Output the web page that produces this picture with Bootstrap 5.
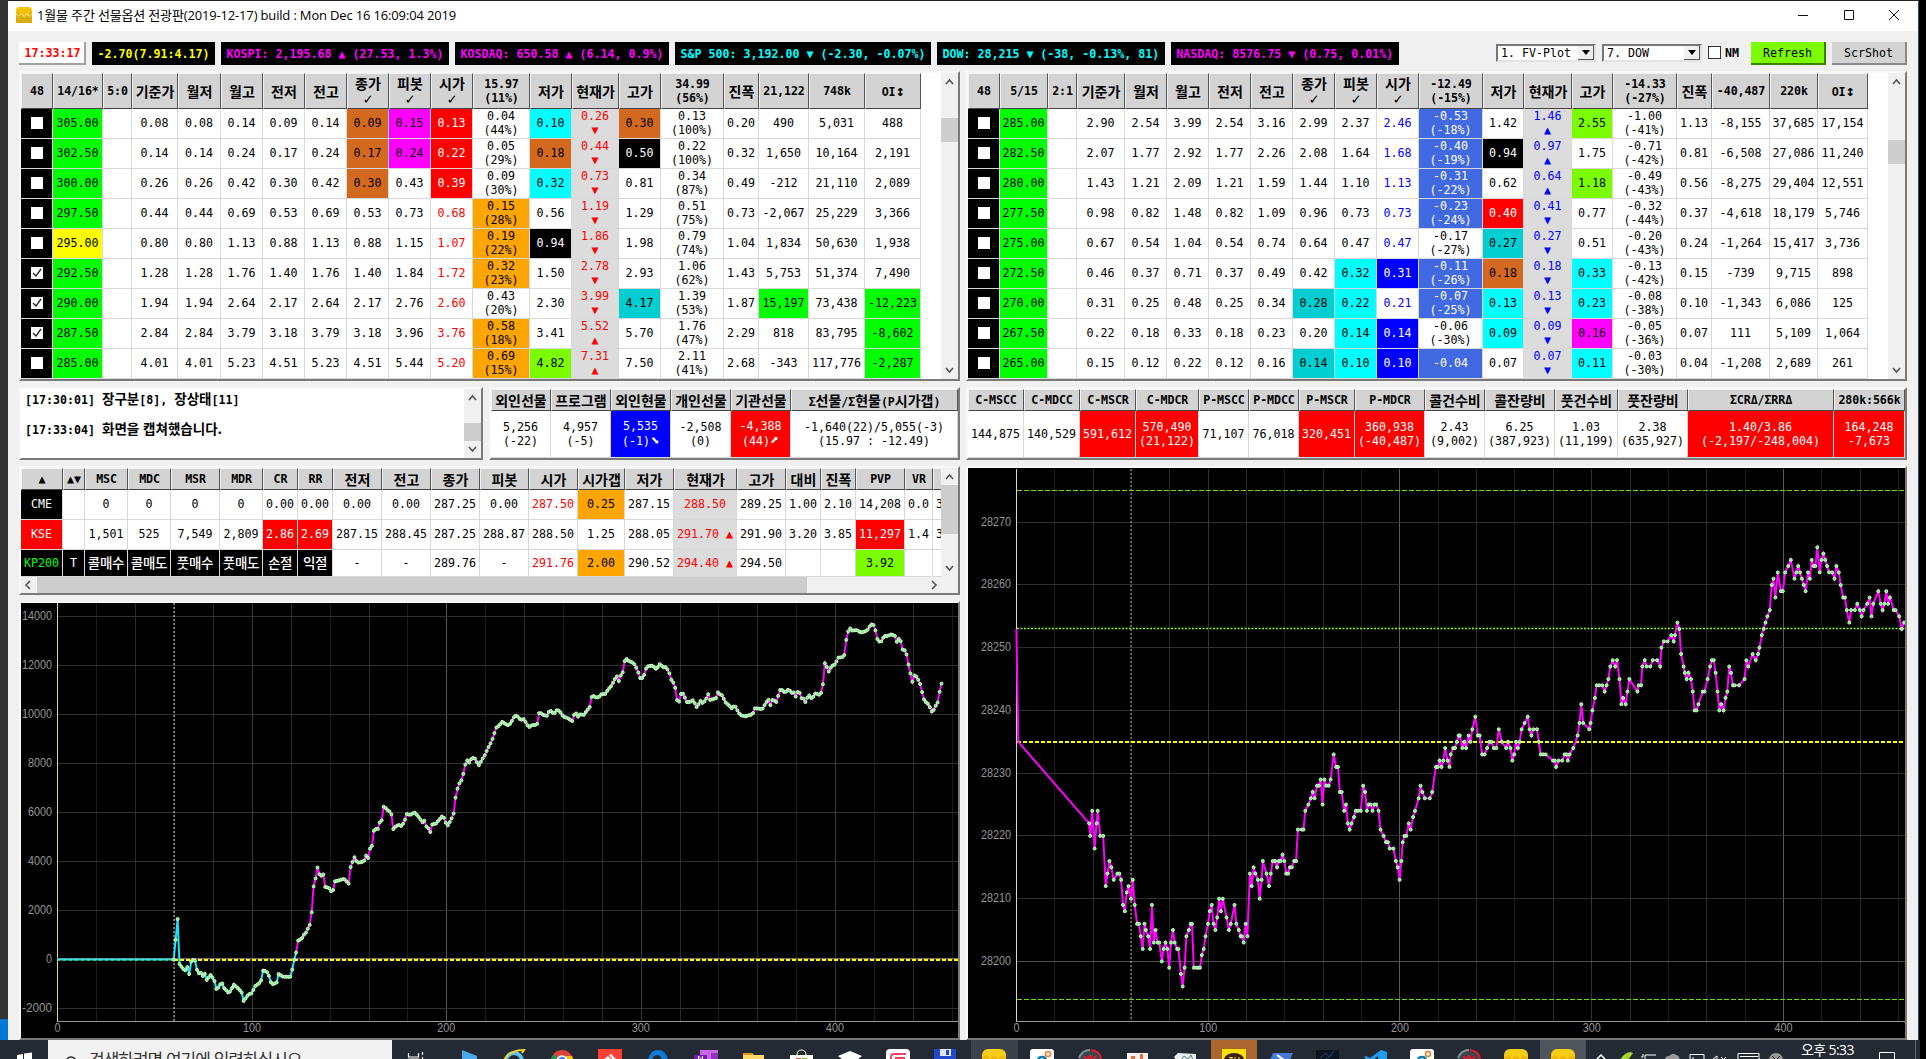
<!DOCTYPE html>
<html lang="ko">
<head>
<meta charset="utf-8">
<title>선물옵션 전광판</title>
<link href="https://cdn.jsdelivr.net/npm/bootstrap@5.3.0/dist/css/bootstrap.min.css" rel="stylesheet">
<style>
body{width:1926px;height:1059px;overflow:hidden;background:#1f1f21;font:11.63px/14px "DejaVu Sans Mono","Noto Sans CJK KR",monospace;color:#000}
.edge-l{width:8px;background:linear-gradient(#333 0 1019px,#0078d7 1019px)}
.edge-r{width:8px;background:#000;border-left:1px solid #2a5070}
.desk{height:1040px}
.win{background:#f0f0f0;border-top:1px solid #222}
.titlebar{height:30px;padding:0 18px 3px 8px;background:#fff;font:13px/20px "Open Sans","Noto Sans CJK KR",sans-serif}
.title-txt{letter-spacing:-.16px;margin-left:5px}
.tools{height:40px;padding:11px 11px 0 11px;gap:6px}
.lab{height:23px;padding:0 5.500px;background:#000;font-weight:bold;line-height:24px;white-space:pre}
.clock{width:67px;background:#fff;color:red;border-right:2px solid #a0a0a0;border-bottom:2px solid #a0a0a0;line-height:22px}
.combo{width:100px;height:18px;margin-top:2px;background:#fff;border:2px solid;border-color:#777 #e3e3e3 #e3e3e3 #777;padding-left:3px;line-height:15px;white-space:nowrap}
.combo i{width:16px;height:14px;background:#f0f0f0;border-right:1px solid #555;border-bottom:1px solid #555;display:flex;align-items:center;justify-content:center}
.chk{display:inline-block;width:13px;height:13px;background:#fff;border:1px solid #333;flex:none}
.tbtn{width:75px;height:23px;border:0;border-radius:0;border-right:2px solid #8a8a8a;border-bottom:2px solid #8a8a8a;font:11.63px "DejaVu Sans Mono",monospace;padding:1px 0 0;background:#d3d3d3}
.tbtn.go{background:#7cfc00;border-color:#3c8000}
.main{padding:0 11px 0 11px;gap:6px}
.colL{width:941px;gap:6px}.colR{width:941px;gap:6px}
.pane{border:2px solid;border-color:#f8f8f8 #7a7a7a #7a7a7a #f8f8f8;background:#fff;display:flex;overflow:hidden}
.p1{height:310px}.p2{height:73px}.p3{height:129px}
.cl{height:439px}.cr{height:574px}.cl,.cr{background:#000}
.gt{table-layout:fixed;border-collapse:separate;border-spacing:0;flex:none}
.gt th{background:#d3d3d3;text-align:center;vertical-align:middle;padding:0;font-weight:bold;border:1px solid;border-color:#f4f4f4 #555 #444 #f0f0f0;white-space:nowrap;overflow:hidden;letter-spacing:-.1px}
.gt td{text-align:center;vertical-align:middle;padding:0 0 1px;border-right:1px solid #d8d8d8;border-bottom:1px solid #d8d8d8;white-space:nowrap;overflow:hidden}
.gt .sp>div{margin:0 -10px}
.ko{font:bold 14px/16px "Noto Sans CJK KR",sans-serif;letter-spacing:0}
.tick{font-size:15px;line-height:14px}
td .ko{font-weight:500;font-size:13.5px;letter-spacing:-.3px}
.k{background:#000;color:#fff}.g{background:#0f0}.y{background:#ff0}.h{background:#d2691e}.m{background:#f0f}.r{background:red;color:#fff}
.c{background:#0ff}.t{background:#00ced1}.o{background:orange}.l{background:#7cfc00}.b{background:#00f;color:#fff}.v{background:#4169e1;color:#fff}
.fr{color:red}.fb{color:#00f}.nr{background:#dcdcdc;color:red}.nb{background:#dcdcdc;color:#00f}.kg{background:#000;color:#0f0}
.sb{width:17px;background:#f0f0f0;margin-left:auto;flex:none}
.sb svg,.hs svg{display:block;flex:none}
.thumb{background:#cdcdcd}
.logbox{padding:0 4px;font-weight:bold;margin-top:-4px}
.logbox>div{height:30px;line-height:30px}
.logbox .ko{font-size:13.5px;line-height:1}
.pane>.chart{display:block}
.chart text{font-family:"Liberation Sans",sans-serif;font-size:13px;fill:#969696}
.taskbar{height:19px;background:#232a33;overflow:hidden}
.find{width:344px;margin-left:48px;background:#f2f2f2;color:#333;font:17px/20px "Noto Sans CJK KR",sans-serif;letter-spacing:-1px;overflow:hidden;white-space:nowrap;padding:9px 0 0 16px}
.find svg{margin-right:11px}
.tclock{width:60px;color:#fff;font:14px/20px "Open Sans","Noto Sans CJK KR",sans-serif;letter-spacing:-.6px;white-space:nowrap}
</style>
</head>
<body>
<div class="d-flex desk">
 <div class="edge-l"></div>
 <div class="win flex-fill">
  <div class="titlebar d-flex align-items-center">
   <svg width="16" height="16" viewBox="0 0 16 16"><rect width="16" height="16" rx="4" fill="#f4c20d"/><path d="M0 9 3 5l4 5 2-3 2 3 4-5 1 2v9H0z" fill="#d9ad10"/><path d="M0 7 2.500 9.500 5 6l3 4 3-4 2.500 3.500L16 7" fill="none" stroke="#fbe27b" stroke-width="1"/></svg>
   <span class="title-txt">1월물 주간 선물옵션 전광판(2019-12-17) build : Mon Dec 16 16:09:04 2019</span>
   <svg class="ms-auto" width="102" height="14" viewBox="0 0 102 14" fill="none" stroke="#111"><path d="M0 7.500h10M46.500 2.500h9v9h-9zM91 2l10 10M101 2 91 12"/></svg>
  </div>
  <div class="tools d-flex">
   <div class="lab clock">17:33:17</div>
   <div class="lab" style="color:#ff0">-2.70(7.91:4.17)</div>
   <div class="lab" style="color:#f0f">KOSPI: 2,195.68 ▲ (27.53, 1.3%)</div>
   <div class="lab" style="color:#f0f">KOSDAQ: 650.58 ▲ (6.14, 0.9%)</div>
   <div class="lab" style="color:#0ff">S&amp;P 500: 3,192.00 ▼ (-2.30, -0.07%)</div>
   <div class="lab" style="color:#0ff">DOW: 28,215 ▼ (-38, -0.13%, 81)</div>
   <div class="lab" style="color:#f0f">NASDAQ: 8576.75 ▼ (0.75, 0.01%)</div>
   <div class="combo d-flex justify-content-between ms-auto"><span>1. FV-Plot</span><i><svg width="8" height="5"><path d="M0 0h8L4 5z"/></svg></i></div>
   <div class="combo d-flex justify-content-between"><span>7. DOW</span><i><svg width="8" height="5"><path d="M0 0h8L4 5z"/></svg></i></div>
   <div class="d-flex align-items-center gap-1" style="width:37px;height:21px"><span class="chk"></span><b>NM</b></div>
   <button class="tbtn go">Refresh</button>
   <button class="tbtn">ScrShot</button>
  </div>
  <div class="main d-flex">
   <div class="colL d-flex flex-column">
    <div class="pane p1"><table class="gt" id="calls"></table><div class="sb" data-h="306" data-a="45" data-l="24"></div></div>
    <div class="d-flex" style="gap:6px">
     <div class="pane p2" style="width:464px"><div class="logbox"><div>[17:30:01] <span class="ko">장구분</span>[8], <span class="ko">장상태</span>[11]</div><div>[17:33:04] <span class="ko">화면을 캡쳐했습니다.</span></div></div><div class="sb" data-h="69" data-a="34" data-l="18"></div></div>
     <div class="pane p2" style="width:471px"><table class="gt" id="flow"></table></div>
    </div>
    <div class="pane p3 flex-column">
     <div class="d-flex" style="height:109px"><div class="overflow-hidden" style="width:920px"><table class="gt" id="idx"></table></div><div class="sb" data-h="109" data-a="17" data-l="49"></div></div>
     <div class="hs d-flex" style="height:16px;background:#f0f0f0">
      <svg width="16" height="16" fill="none" stroke="#555" stroke-width="1.600"><path d="m9 4-4 4 4 4"/></svg><div class="thumb" style="width:770px"></div><svg class="ms-auto me-3" width="16" height="16" fill="none" stroke="#555" stroke-width="1.600"><path d="m6 4 4 4-4 4"/></svg></div>
    </div>
    <div class="pane cl"><svg class="chart" id="fv" width="937" height="435" viewBox="21 603 937 435"></svg></div>
   </div>
   <div class="colR d-flex flex-column">
    <div class="pane p1"><table class="gt" id="puts"></table><div class="sb" data-h="306" data-a="67" data-l="24"></div></div>
    <div class="pane p2"><table class="gt" id="sums"></table></div>
    <div class="pane cr"><svg class="chart" id="dow" width="937" height="570" viewBox="968 468 937 570"></svg></div>
   </div>
  </div>
 </div>
 <div class="edge-r"></div>
</div>
<div class="taskbar d-flex position-relative">
 <svg class="position-absolute top-0 start-0" width="1926" height="19" viewBox="0 1040 1926 19" id="tray">
  <path d="M17 1055l6-1v5h-6zM24 1053.600l8-1.200v7h-8z" fill="#fff"/>
  <g fill="none" stroke="#fff" stroke-width="1.200"><path d="M408.500 1053v4h10v-4M408.500 1060v-1h10v1M422.500 1052v3M422.500 1057v3"/></g>
  <path d="M462 1050l15 6v4h-15z" fill="#4aa8ee"/>
  <circle cx="514" cy="1061" r="8" fill="none" stroke="#5bc3f3" stroke-width="4"/><path d="M504 1060q6-10 20-10l-2 3" fill="none" stroke="#f3d12c" stroke-width="2"/>
  <circle cx="562" cy="1061" r="11" fill="#db4437"/><path d="M551 1059l3-5 6 8h-9z" fill="#0f9d58"/><path d="M566 1056h6l2 5h-8z" fill="#f4c20d"/><circle cx="562" cy="1061" r="5" fill="#4285f4" stroke="#fff" stroke-width="1.500"/>
  <path d="M598 1049h24v11h-24z" fill="#fb4036"/><path d="M603 1060l5-4 3 3-1 1zM609 1055l2-1 6 6h-4z" fill="#fff"/>
  <path d="M648 1060q2-10 10-10t10 10h-6q-1-5-5-5t-5 5z" fill="#0a7bd6"/>
  <path d="M700 1050h18v10h-18z" fill="#ca64ea"/><path d="M711 1053h7v7h-7z" fill="#9332bf"/><path d="M694 1055h13v5h-13z" fill="#7719aa"/><path d="M698.500 1060v-4l4 4v-4" stroke="#fff" fill="none"/>
  <path d="M743 1053h9l2 2h10v5h-21z" fill="#ffd86b"/><path d="M743 1053h9l1 2h-10z" fill="#d99a12"/>
  <path d="M797 1055q0-5 4.500-5t4.500 5" fill="none" stroke="#fff"/><path d="M790 1055h23v5h-23z" fill="#fff"/><path d="M796 1058h5v2h-5z" fill="#f25022"/><path d="M802 1058h5v2h-5z" fill="#7fba00"/>
  <path d="M838 1056l12-5 12 5-4 3h-16z" fill="#fff"/>
  <rect x="886" y="1049" width="24" height="24" rx="4" fill="#fff"/><path d="M891 1060v-3q0-3 3-3h12M896 1060v-2h9" stroke="#ef4360" stroke-width="2" fill="none"/>
  <path d="M934 1049h22v11h-22z" fill="#2148c8"/><path d="M940 1049h11v7h-11z" fill="#dbe6f7"/><path d="M946 1050h3v5h-3z" fill="#2148c8"/>
  <path d="M971 1040h47v19h-47z" fill="#3b424a"/><path d="M1211 1040h46v19h-46z" fill="#ab6630"/><path d="M1540 1040h46v19h-46z" fill="#50555b"/>
  <g id="yl"><rect x="982" y="1049" width="24" height="24" rx="6" fill="#f9cd13"/><path d="M982 1058l4-3 4 4 4-4 4 4 4-4 4 3v4h-24z" fill="#eeb80c"/></g><use href="#yl" x="522"/><use href="#yl" x="569"/>
  <g id="eg"><rect x="1030" y="1049" width="24" height="24" rx="3" fill="#fff"/><circle cx="1048" cy="1054" r="2.500" fill="none" stroke="#ef7c2a" stroke-width="1.500"/><path d="M1038 1061q0-4 4-4t4 4" fill="none" stroke="#0e7fa8" stroke-width="2.500"/></g><use href="#eg" x="380"/>
  <g id="wb"><circle cx="1090" cy="1061" r="11.500" fill="#39464c"/><path d="M1079 1058q3-8 11-8" fill="none" stroke="#7c9499" stroke-width="2"/><path d="M1091 1050q9 1 10 9" stroke="#e01b2b" stroke-width="2" fill="none"/><path d="M1084 1056l3 4 3-4 3 4 3-4" stroke="#e3162b" stroke-width="2" fill="none"/></g><use href="#wb" x="379"/>
  <path d="M1127 1053h21v7h-21z" fill="#f5f2f0"/><path d="M1131 1056h4v4h-4zM1140 1054h3v6h-3z" fill="#f06b38"/>
  <path d="M1174 1057l4-4 18 1v6h-20z" fill="#e9eeee"/><path d="M1181 1060l3-4 4 3 3-4 2 5" stroke="#577" fill="none"/>
  <path d="M1222 1049h24v11h-24z" fill="#fae100"/><ellipse cx="1234" cy="1060" rx="10" ry="7" fill="#3b1e1e"/><path d="M1229 1057.500h4m-2 0v4M1235 1057v4M1239 1057v4" stroke="#fae100"/>
  <path d="M1273 1053h20l-3 7h-20z" fill="#4678d8"/><path d="M1277 1055l7 5" stroke="#fff" stroke-width="2"/>
  <path d="M1316 1050h23v10h-23z" fill="#0c1420"/><path d="M1320 1058l6-5 3 4 5-6M1324 1060l8-5" stroke="#27405e" fill="none"/>
  <path d="M1381 1050l6 2v8h-9v-4l-5 4h-6l-3-3 2-1 4 2z" fill="#1f9cf0"/>
  <path d="M1597 1059l4-4 4 4" stroke="#fff" fill="none" stroke-width="1.500"/><path d="M1620 1060q4-7 10-8l3 1-5 7z" fill="#a4d82c"/>
  <g fill="none" stroke="#fff"><path d="M1645 1060v-5h11M1643 1054v3h-2M1690 1054.500h14v6h-14zM1693 1057v2M1713 1059l4-3v4M1721 1057l5 5M1726 1057l-5 5M1738 1053.500h21v6h-21zM1740 1056.500h18"/><path d="M1879.500 1052.500h15v8h-15z"/></g>
  <path d="M1665 1060q0-4 4-4 4-4 7-1 3 0 4 5z" fill="#999"/><circle cx="1776" cy="1060" r="7" fill="#999"/><path d="M1772 1056l3 3M1780 1056l-3 3" stroke="#222"/>
  <path d="M1915.500 1040v19" stroke="#667"/><path d="M1920 1040h6v19h-6z"/>
 </svg>
 <div class="find"><svg width="14" height="16" fill="none" stroke="#222" stroke-width="1.500"><circle cx="7" cy="9" r="5"/></svg>검색하려면 여기에 입력하십시오</div>
 <div class="tclock ms-auto" style="margin-right:65px">오후 5:33</div>
</div>
<script src="https://cdn.jsdelivr.net/npm/bootstrap@5.3.0/dist/js/bootstrap.bundle.min.js"></script>
<script>
const ck=on=>`<svg width="12" height="12" viewBox="0 0 12 12" style="display:block;margin:auto"><rect width="12" height="12" fill="#fff"/>${on?'<path d="M2 6l3 3 5-7" fill="none" stroke="#222" stroke-width="1.300"/>':''}</svg>`;
const fmt=s=>s==='.'?'':s.replace(/_/g,' ').replace(/[가-힣]+/g,k=>`<span class="ko">${k}</span>`).replace(/[✓↕⬊⬈]/g,k=>`<span class="tick">${k}</span>`).replace(/~/g,'<br>');
/* cells are separated by blanks, "|x" names the cell colour, "~" breaks a line */
function grid(id,edges,head,hh,rows,heights){
  const e=edges.split(',').map(Number),w=e.slice(1).map((v,i)=>v-e[i]);
  let h=`<colgroup>${w.map(x=>`<col style="width:${x}px">`).join('')}</colgroup><tr style="height:${hh}px">${head.split(' ').map(c=>`<th>${fmt(c)}</th>`).join('')}</tr>`;
  rows.trim().split('\n').forEach((r,i)=>{h+=`<tr style="height:${heights[i]||30}px">`+r.trim().split(/ +/).map(c=>{
    const [s,k='']=c.split('|');return `<td class="sp ${k}"><div>${s==='[]'?ck(0):s==='[v]'?ck(1):fmt(s)}</div></td>`}).join('')+'</tr>'});
  const t=document.getElementById(id);t.style.width=(e[e.length-1]-e[0])+'px';t.innerHTML=h;
}
grid('calls','21,53,103,132,178,221,263,305,347,389,431,473,530,572,619,661,724,759,809,865,921',
'48 14/16* 5:0 기준가 월저 월고 전저 전고 종가~✓ 피봇~✓ 시가~✓ 15.97~(11%) 저가 현재가 고가 34.99~(56%) 진폭 21,122 748k OI↕',36,`
[]|k 305.00|g . 0.08 0.08 0.14 0.09 0.14 0.09|h 0.15|m 0.13|r 0.04~(44%) 0.10|c 0.26~▼|nr 0.30|h 0.13~(100%) 0.20 490 5,031 488
[]|k 302.50|g . 0.14 0.14 0.24 0.17 0.24 0.17|h 0.24|m 0.22|r 0.05~(29%) 0.18|h 0.44~▼|nr 0.50|k 0.22~(100%) 0.32 1,650 10,164 2,191
[]|k 300.00|g . 0.26 0.26 0.42 0.30 0.42 0.30|h 0.43 0.39|r 0.09~(30%) 0.32|c 0.73~▼|nr 0.81 0.34~(87%) 0.49 -212 21,110 2,089
[]|k 297.50|g . 0.44 0.44 0.69 0.53 0.69 0.53 0.73 0.68|fr 0.15~(28%)|o 0.56 1.19~▼|nr 1.29 0.51~(75%) 0.73 -2,067 25,229 3,366
[]|k 295.00|y . 0.80 0.80 1.13 0.88 1.13 0.88 1.15 1.07|fr 0.19~(22%)|o 0.94|k 1.86~▼|nr 1.98 0.79~(74%) 1.04 1,834 50,630 1,938
[v]|k 292.50|g . 1.28 1.28 1.76 1.40 1.76 1.40 1.84 1.72|fr 0.32~(23%)|o 1.50 2.78~▼|nr 2.93 1.06~(62%) 1.43 5,753 51,374 7,490
[v]|k 290.00|g . 1.94 1.94 2.64 2.17 2.64 2.17 2.76 2.60|fr 0.43~(20%) 2.30 3.99~▼|nr 4.17|t 1.39~(53%) 1.87 15,197|g 73,438 -12,223|g
[v]|k 287.50|g . 2.84 2.84 3.79 3.18 3.79 3.18 3.96 3.76|fr 0.58~(18%)|o 3.41 5.52~▲|nr 5.70 1.76~(47%) 2.29 818 83,795 -8,602|g
[]|k 285.00|g . 4.01 4.01 5.23 4.51 5.23 4.51 5.44 5.20|fr 0.69~(15%)|o 4.82|l 7.31~▲|nr 7.50 2.11~(41%) 2.68 -343 117,776 -2,287|g`,[]);
grid('puts','968,1000,1048,1077,1125,1167,1209,1251,1293,1335,1377,1419,1483,1524,1572,1613,1677,1712,1770,1818,1868',
'48 5/15 2:1 기준가 월저 월고 전저 전고 종가~✓ 피봇~✓ 시가~✓ -12.49~(-15%) 저가 현재가 고가 -14.33~(-27%) 진폭 -40,487 220k OI↕',36,`
[]|k 285.00|g . 2.90 2.54 3.99 2.54 3.16 2.99 2.37 2.46|fb -0.53~(-18%)|v 1.42 1.46~▲|nb 2.55|l -1.00~(-41%) 1.13 -8,155 37,685 17,154
[]|k 282.50|g . 2.07 1.77 2.92 1.77 2.26 2.08 1.64 1.68|fb -0.40~(-19%)|v 0.94|k 0.97~▲|nb 1.75 -0.71~(-42%) 0.81 -6,508 27,086 11,240
[]|k 280.00|g . 1.43 1.21 2.09 1.21 1.59 1.44 1.10 1.13|fb -0.31~(-22%)|v 0.62 0.64~▲|nb 1.18|l -0.49~(-43%) 0.56 -8,275 29,404 12,551
[]|k 277.50|g . 0.98 0.82 1.48 0.82 1.09 0.96 0.73 0.73|fb -0.23~(-24%)|v 0.40|r 0.41~▼|nb 0.77 -0.32~(-44%) 0.37 -4,618 18,179 5,746
[]|k 275.00|g . 0.67 0.54 1.04 0.54 0.74 0.64 0.47 0.47|fb -0.17~(-27%) 0.27|t 0.27~▼|nb 0.51 -0.20~(-43%) 0.24 -1,264 15,417 3,736
[]|k 272.50|g . 0.46 0.37 0.71 0.37 0.49 0.42 0.32|c 0.31|b -0.11~(-26%)|v 0.18|h 0.18~▼|nb 0.33|c -0.13~(-42%) 0.15 -739 9,715 898
[]|k 270.00|g . 0.31 0.25 0.48 0.25 0.34 0.28|t 0.22|c 0.21|fb -0.07~(-25%)|v 0.13|c 0.13~▼|nb 0.23|c -0.08~(-38%) 0.10 -1,343 6,086 125
[]|k 267.50|g . 0.22 0.18 0.33 0.18 0.23 0.20 0.14|c 0.14|b -0.06~(-30%) 0.09|c 0.09~▼|nb 0.16|m -0.05~(-36%) 0.07 111 5,109 1,064
[]|k 265.00|g . 0.15 0.12 0.22 0.12 0.16 0.14|t 0.10|c 0.10|b -0.04|v 0.07 0.07~▼|nb 0.11|c -0.03~(-30%) 0.04 -1,208 2,689 261`,[]);
grid('flow','491,551,611,671,731,791,958','외인선물 프로그램 외인현물 개인선물 기관선물 Σ선물/Σ현물(P시가갭)',22,
`5,256~(-22) 4,957~(-5) 5,535~(-1)⬊|b -2,508~(0) -4,388~(44)⬈|r -1,640(22)/5,055(-3)~(15.97_:_-12.49)`,[47]);
grid('sums','968,1024,1080,1136,1199,1249,1299,1355,1425,1485,1555,1618,1688,1834,1905','C-MSCC C-MDCC C-MSCR C-MDCR P-MSCC P-MDCC P-MSCR P-MDCR 콜건수비 콜잔량비 풋건수비 풋잔량비 ΣCRΔ/ΣRRΔ 280k:566k',22,
`144,875 140,529 591,612|r 570,490~(21,122)|r 71,107 76,018 320,451|r 360,938~(-40,487)|r 2.43~(9,002) 6.25~(387,923) 1.03~(11,199) 2.38~(635,927) 1.40/3.86~(-2,197/-248,004)|r 164,248~-7,673|r`,[47]);
grid('idx','21,63,85,128,171,220,263,298,333,382,431,480,529,578,625,674,737,786,821,856,905,933,1000','▲ ▲▼ MSC MDC MSR MDR CR RR 전저 전고 종가 피봇 시가 시가갭 저가 현재가 고가 대비 진폭 PVP VR .',22,`
CME|k . 0 0 0 0 0.00 0.00 0.00 0.00 287.25 0.00 287.50|fr 0.25|o 287.15 288.50|nr 289.25 1.00 2.10 14,208 0.0 3|cut
KSE|r . 1,501 525 7,549 2,809 2.86|r 2.69|r 287.15 288.45 287.25 288.87 288.50 1.25 288.05 291.70_▲|nr 291.90 3.20 3.85 11,297|r 1.4 3|cut
KP200|kg T|k 콜매수|k 콜매도|k 풋매수|k 풋매도|k 손절|k 익절|k - - 289.76 - 291.76|fr 2.00|o 290.52 294.40_▲|nr 294.50 . . 3.92|l . .`,[30,30,27]);
document.querySelectorAll('.cut').forEach(c=>{c.style.textAlign='left';c.firstChild.style.marginLeft='3px'});
document.querySelectorAll('.sb').forEach(s=>{const h=+s.dataset.h,a=+s.dataset.a,l=+s.dataset.l;
 s.innerHTML=`<svg width="17" height="${h}" fill="none" stroke="#555" stroke-width="1.600"><path d="M5 11l3.500-4 3.500 4M5 ${h-11}l3.500 4 3.500-4"/><path d="M0 ${a}h17v${l}h-17z" fill="#cdcdcd" stroke="none"/></svg>`});

const line=(x1,y1,x2,y2,c,w=1,d='')=>`<path d="M${x1} ${y1}L${x2} ${y2}" stroke="${c}" stroke-width="${w}" ${d?`stroke-dasharray="${d}"`:''} fill="none"/>`;
const dot=([x,y])=>`<circle cx="${x.toFixed(1)}" cy="${y.toFixed(1)}" r="1.500" fill="#5df45d" stroke="#e4ffe4" stroke-width="1"/>`;
const label=(s,x,y,w,a)=>`<text x="${x}" y="${y}" text-anchor="${a}" textLength="${w}" lengthAdjust="spacingAndGlyphs">${s}</text>`;
const pts=s=>s.trim().split(/\s+/).map(p=>p.split(',').map(Number));
const poly=(p,c)=>`<polyline points="${p.map(q=>q.map(v=>v.toFixed(1)).join()).join(' ')}" fill="none" stroke="${c}" stroke-width="2"/>`;

/* flow chart, knots in plot units (3.175 per minute) */
{let s='';const X=t=>57.5+1.944*t;
for(let t=20;t<464;t+=20)s+=line(Math.round(X(t))+.5,603,Math.round(X(t))+.5,1021,t%100?(t/20%2?'#1d1d1d':'#2b2b2b'):t==200?'#575757':'#383838');
for(let v=-2000;v<=14000;v+=2000){const y=Math.floor(959.7-v*.02448)+.5;s+=line(57,y,959,y,'#303030');s+=label(v,52,y+3.5,String(v).length*6,'end')}
for(let t=0;t<=400;t+=100)s+=label(t,X(t),1031.5,String(t).length*6,'middle');
s+=line(57,1021.500,959,1021.500,'#999')+line(57.5,603,57.5,1021,'#d8d8a0')+line(174,603,174,1021,'#e0e0c0',1,'2 2');
s+=line(57,958.500,959,958.500,'#7d6a60',1)+line(174,960,959,960,'#ffff00',2,'4 2')+line(57,959.500,174,959.500,'#22dcff',2)+line(57,960,174,960,'#80ff60',1,'3 3');
const k=pts(`283.65,1079 286.8,1020 290,957 293.2,1093 296,1099 302,1113 306,1101 309,1123 312,1085 318,1076 321,1107 325,1120 328,1118 331,1129 334,1118 337,1141 344,1125 350,1140 353,1167 356,1165 362,1146 366,1164 374,1180 382,1154 390,1167 395,1178 398,1203 406,1183 411,1180 417,1158 426,1146 430,1109 438,1119 442,1146 446,1153 452,1147 455,1122 462,1130 474,1131 477,1112 480,1083 483,1065 487,1020 492,1018 497,1002 501,996 504,979 507,972 509,939 512,861 516,831 519,798 522,825 525,827 528,822 531,861 537,863 541,874 544,870 547,844 554,841 562,836 570,852 573,793 576,785 578,768 581,781 585,788 594,785 598,767 601,775 605,740 608,737 611,687 617,687 620,668 624,660 627,613 631,629 635,632 639,639 642,688 646,680 651,674 656,679 661,662 664,642 670,645 677,637 681,645 685,654 690,667 694,661 697,684 700,685 703,697 706,673 712,671 717,660 722,649 726,655 730,680 734,668 738,654 741,640 745,578 750,551 754,540 757,520 760,493 763,481 767,489 770,475 775,473 779,487 782,496 786,483 791,468 798,441 803,424 807,402 811,381 815,378 820,365 824,370 829,376 834,370 841,346 846,350 850,360 856,357 860,372 864,382 869,375 877,375 881,335 886,344 893,348 898,330 905,342 910,328 915,336 920,350 927,354 935,364 939,335 944,350 948,342 953,346 958,333 963,322 967,284 972,292 978,292 983,281 988,283 993,269 999,257 1003,241 1008,228 1011,245 1014,226 1018,214 1021,173 1027,183 1035,189 1039,202 1043,220 1046,236 1051,233 1054,208 1059,198 1066,197 1072,208 1078,191 1083,202 1088,201 1093,218 1096,238 1102,254 1106,301 1110,306 1113,275 1117,285 1122,307 1127,306 1132,300 1138,322 1144,303 1148,310 1153,298 1157,282 1160,300 1170,294 1173,275 1177,286 1180,286 1184,305 1190,315 1195,325 1200,316 1204,330 1209,345 1217,349 1229,343 1233,325 1240,326 1245,328 1250,311 1255,298 1258,317 1262,298 1268,306 1272,282 1275,266 1282,278 1288,268 1294,280 1297,277 1300,291 1303,275 1307,280 1310,300 1313,295 1315,308 1321,284 1326,297 1332,279 1340,286 1344,255 1347,189 1351,203 1354,216 1358,198 1364,193 1370,171 1375,173 1380,163 1383,104 1388,84 1392,92 1400,90 1406,98 1414,93 1418,88 1422,73 1427,75 1430,92 1433,117 1438,129 1444,108 1450,108 1456,103 1462,108 1465,127 1468,116 1472,126 1475,156 1479,147 1483,187 1486,212 1490,246 1494,222 1500,240 1504,257 1508,295 1512,306 1516,312 1520,326 1523,340 1527,320 1531,312 1534,280 1538,249`);
const all=[];for(let x=k[0][0],i=0;x<=1538.5;x+=3.175){while(i<k.length-2&&k[i+1][0]<x)i++;const[a,b]=[k[i],k[i+1]],f=Math.min(1,(x-a[0])/(b[0]-a[0]));all.push([x/1.6333,600+(a[1]+f*(b[1]-a[1]))/3])}
const n=all.findIndex(p=>p[0]>295);s+=poly(all.slice(0,n+1),'#19e6ff')+poly(all.slice(n),'#ff00ff')+all.map(dot).join('');
document.getElementById('fv').innerHTML=s}

/* DOW chart, x in plot units (3.1125 per minute), price offset from 28200 */
{let s='';const X=t=>1016.4+1.9175*t,Y=v=>961.4-6.274*v;
for(let t=20;t<464;t+=20)s+=line(Math.floor(X(t))+.5,469,Math.floor(X(t))+.5,1021,t%100?(t/20%2?'#1d1d1d':'#2b2b2b'):t%200?'#343434':'#5a5a5a');
for(let v=0;v<=70;v+=10){const y=Math.floor(Y(v))+.5;s+=line(1017,y,1905,y,v?'#303030':'#505050')+label(28200+v,1011,y+3.5,30,'end')}
for(let t=0;t<=400;t+=100)s+=label(t,X(t),1031.5,String(t).length*6,'middle');
s+=line(1016,1021.500,1905,1021.500,'#999')+line(1016.500,469,1016.500,1021,'#d8d8c0')+line(1131,469,1131,1021,'#b8b870',1,'2 2');
s+=line(1017,490.500,1905,490.500,'#6de000',1,'5 2')+line(1017,999.500,1905,999.500,'#6de000',1,'5 2')+line(1017,628.500,1905,628.500,'#8cff10',1.6,'2 1.5')+line(1017,742,1905,742,'#ffff00',2,'4 2');
const d=pts(`210,22 212,20 215,24 219,18 222,22 224,24 228,20 233,20 237,12 240,14 243,16 246,15 250,13 256,14 259,14 262,13 265,9 268,8 271,11 274,12 278,10 281,13 284,9 288,6 291,6 294,4 297,2 300,6 302,5 306,4 309,2 312,9 315,3 318,5 321,3 324,3 328,0 331,2 334,3 337,2 340,-1 343,3 346,5 349,3 353,2 355,2 359,-2 362,-4 365,-1 368,4 372,5 375,6 377,6 380,-1 384,-1 387,-1 390,-1 393,1 396,2 399,4 403,6 406,8 409,9 412,6 415,5 418,7 421,10 424,8 427,10 433,7 437,5 440,6 446,9 449,6 453,5 456,4 458,4 461,3 464,6 467,4 471,14 474,12 477,15 480,14 484,13 487,10 490,13 492,16 498,14 502,12 505,14 508,16 512,16 515,15 518,16 521,16 524,17 527,16 530,14 533,14 536,15 539,15 543,16 546,16 549,21 555,21 558,21 561,24 566,25 570,26 573,27 576,26 580,28 583,28 586,29 589,25 592,29 595,28 599,28 602,29 607,33 611,31 614,31 617,27 620,27 624,24 627,25 630,22 633,21 636,22 640,23 643,24 647,24 651,24 655,28 658,27 661,24 664,25 667,25 670,24 673,25 676,25 680,24 683,21 688,20 692,19 695,19 698,18 704,18 708,16 711,15 714,13 717,16 719,19 722,20 725,20 729,22 732,21 736,23 739,24 745,26 748,28 751,27 755,26 763,26 767,27 773,31 776,31 779,32 782,31 785,32 788,34 792,32 795,31 797,33 801,34 804,34 807,35 810,36 812,36 816,34 819,35 822,34 826,36 829,35 832,37 837,39 841,36 844,36 848,33 852,33 856,34 860,35 863,35 867,34 871,34 875,37 880,35 887,34 890,35 894,34 897,32 900,33 903,35 906,34 909,35 912,37 917,38 922,39 925,37 928,36 931,37 937,37 940,35 943,33 947,33 951,33 963,32 966,32 968,31 972,32 978,32 982,33 985,33 987,32 990,33 996,34 1003,36 1006,38 1009,41 1012,38 1022,37 1024,38 1027,40 1031,42 1034,44 1038,44 1043,44 1047,43 1050,44 1053,45 1056,47 1060,48 1064,47 1067,48 1071,45 1074,41 1077,42 1081,41 1084,43 1087,45 1100,43 1102,44 1106,44 1108,47 1112,48 1115,47 1121,47 1125,48 1132,48 1137,47 1139,50 1143,51 1149,51 1155,52 1159,51 1161,52 1165,54 1168,53 1171,49 1175,47 1177,46 1180,45 1183,46 1187,45 1190,43 1193,40 1196,40 1199,41 1206,43 1209,43 1214,45 1218,47 1221,48 1224,48 1227,46 1230,43 1233,40 1236,41 1240,40 1243,42 1246,43 1249,47 1252,46 1255,44 1258,44 1265,44 1274,45 1277,48 1280,47 1287,49 1292,48 1296,49 1298,50 1302,52 1305,53 1308,54 1311,55 1315,56 1318,60 1321,61 1324,58 1328,62 1333,59 1336,59 1340,62 1345,63 1349,64 1355,61 1358,62 1361,63 1364,62 1367,61 1370,60 1373,59 1377,62 1380,61 1383,64 1386,63 1389,63 1392,66 1396,62 1399,64 1402,65 1405,64 1408,63 1411,62 1416,62 1420,61 1423,63 1427,62 1430,60 1434,58 1437,58 1440,56 1444,54 1447,56 1453,56 1457,57 1461,56 1464,55 1467,56 1473,57 1477,58 1480,55 1483,57 1491,59 1495,57 1498,56 1501,57 1504,59 1507,57 1510,58 1516,56 1519,56 1525,55 1529,53 1533,54`).map(([x,v])=>[959.7+x/1.6232,Y(v)]);
s+=poly([[X(0),Y(53)],[X(1),Y(35)],...d],'#ff00ff')+d.map(dot).join('');
document.getElementById('dow').innerHTML=s}
</script>
</body>
</html>
